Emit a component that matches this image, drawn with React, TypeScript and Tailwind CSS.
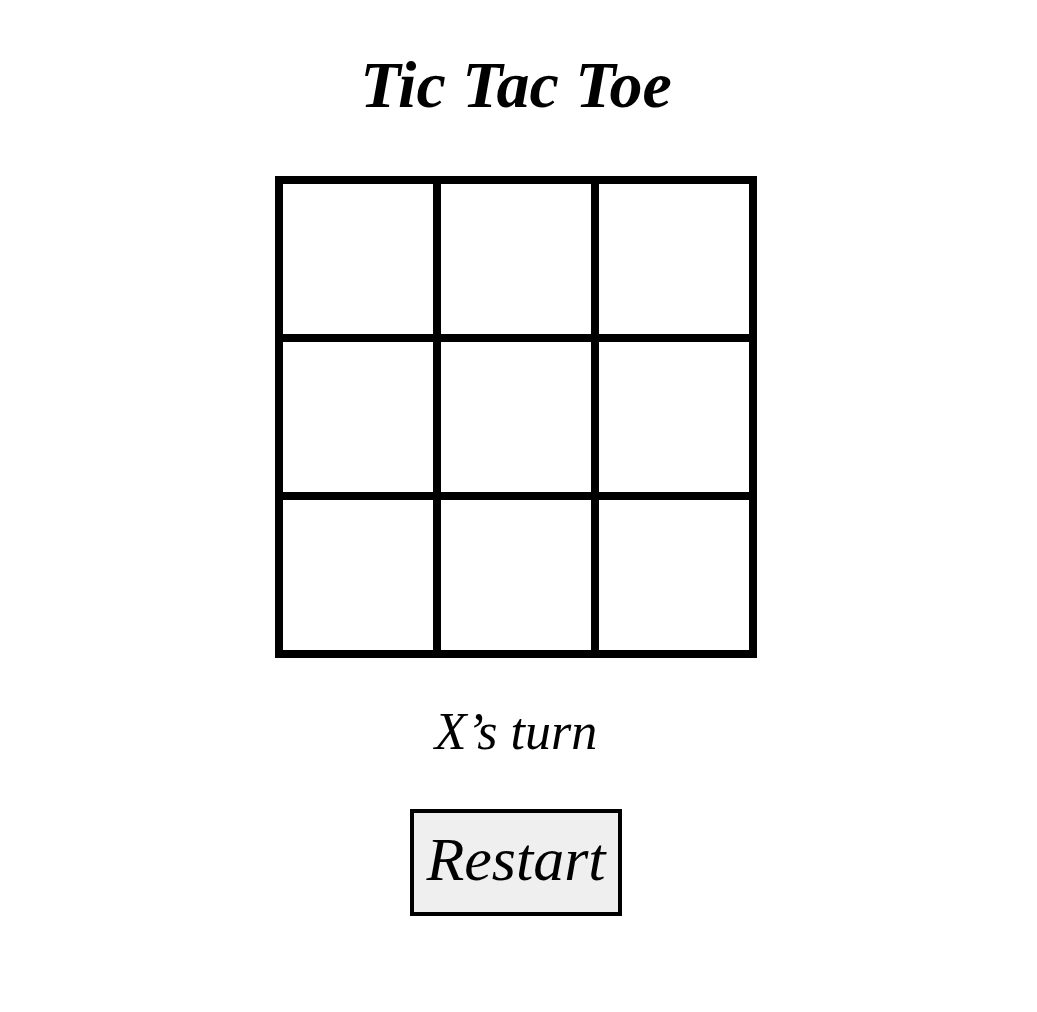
export default function App() {
  const cells = [0, 1, 2, 3, 4, 5, 6, 7, 8]
  return (
    <div className="flex flex-col items-center pr-[5px] italic text-black font-['Liberation_Serif',serif]">
      <h1 className="mt-[40px] text-[66px] font-bold leading-[90px]">Tic Tac Toe</h1>
      <div className="mt-[46px] grid grid-cols-3 w-[482px] h-[482px] border-4 border-black">
        {cells.map((c) => (
          <div key={c} className="border-4 border-black"></div>
        ))}
      </div>
      <p className="mt-[44px] text-[52px] leading-[60px]">X’s turn</p>
      <button className="mt-[47px] w-[212px] h-[107px] pb-[6px] border-4 border-black bg-[#efefef] text-[62px]">Restart</button>
    </div>
  )
}
